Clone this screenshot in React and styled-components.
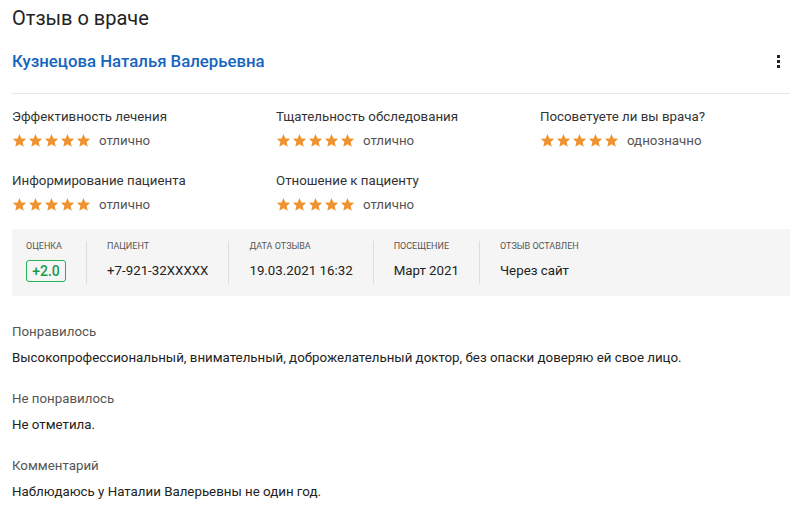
import React from "react"
import styled, { createGlobalStyle } from "styled-components"

const GlobalStyle = createGlobalStyle`
  body {
    margin: 0;
    background: #fff;
    font-family: Roboto, "Liberation Sans", sans-serif;
    color: #222;
  }
`

const ratings = [
  { label: "Эффективность лечения", value: "отлично" },
  { label: "Тщательность обследования", value: "отлично" },
  { label: "Посоветуете ли вы врача?", value: "однозначно" },
  { label: "Информирование пациента", value: "отлично" },
  { label: "Отношение к пациенту", value: "отлично" }
]

const info = [
  { label: "Пациент", value: "+7-921-32XXXXX" },
  { label: "Дата отзыва", value: "19.03.2021 16:32" },
  { label: "Посещение", value: "Март 2021" },
  { label: "Отзыв оставлен", value: "Через сайт" }
]

const sections = [
  {
    title: "Понравилось",
    text: "Высокопрофессиональный, внимательный, доброжелательный доктор, без опаски доверяю ей свое лицо."
  },
  { title: "Не понравилось", text: "Не отметила." },
  { title: "Комментарий", text: "Наблюдаюсь у Наталии Валерьевны не один год." }
]

const Star = () => (
  <svg width="15" height="15" viewBox="0 0 24 24">
    <path
      fill="#f0922f"
      d="M12 1.5l3.1 7.1 7.7.7-5.8 5.1 1.7 7.6L12 18l-6.7 4 1.7-7.6-5.8-5.1 7.7-.7z"
    />
  </svg>
)

const App = () => (
  <Page>
    <GlobalStyle />
    <Title>Отзыв о враче</Title>
    <Header>
      <DoctorName href="#">Кузнецова Наталья Валерьевна</DoctorName>
      <Kebab>
        <i />
        <i />
        <i />
      </Kebab>
    </Header>
    <Ratings>
      {ratings.map(r => (
        <Rating key={r.label}>
          <RatingLabel>{r.label}</RatingLabel>
          <StarsRow>
            <Stars>
              {[0, 1, 2, 3, 4].map(i => (
                <Star key={i} />
              ))}
            </Stars>
            <RatingValue>{r.value}</RatingValue>
          </StarsRow>
        </Rating>
      ))}
    </Ratings>
    <InfoBox>
      <InfoItem>
        <InfoLabel>Оценка</InfoLabel>
        <Badge>+2.0</Badge>
      </InfoItem>
      {info.map(i => (
        <InfoItem key={i.label} divided>
          <InfoLabel>{i.label}</InfoLabel>
          <InfoValue>{i.value}</InfoValue>
        </InfoItem>
      ))}
    </InfoBox>
    <Sections>
      {sections.map(s => (
        <Section key={s.title}>
          <SectionTitle>{s.title}</SectionTitle>
          <SectionText>{s.text}</SectionText>
        </Section>
      ))}
    </Sections>
  </Page>
)

export default App

const Page = styled.div`
  padding: 4px 10px 0 12px;
`
const Title = styled.h1`
  margin: 0;
  font-size: 20px;
  font-weight: 400;
  line-height: 28px;
  color: #222;
`
const Header = styled.div`
  display: flex;
  align-items: center;
  justify-content: space-between;
  height: 32px;
  margin-top: 13px;
  padding-bottom: 16px;
  border-bottom: 1px solid #e6e6e6;
`
const DoctorName = styled.a`
  font-size: 16.8px;
  font-weight: 500;
  color: #1565c0;
  text-decoration: none;
`
const Kebab = styled.div`
  display: flex;
  flex-direction: column;
  gap: 2px;
  margin-right: 10px;
  i {
    display: block;
    width: 3px;
    height: 3px;
    background: #222;
  }
`
const Ratings = styled.div`
  display: grid;
  grid-template-columns: repeat(3, 264px);
  row-gap: 25px;
  padding-top: 15px;
`
const Rating = styled.div`
  display: flex;
  flex-direction: column;
  gap: 8px;
`
const RatingLabel = styled.div`
  font-size: 13.3px;
  line-height: 16px;
  color: #333;
`
const StarsRow = styled.div`
  display: flex;
  align-items: center;
  gap: 8px;
`
const Stars = styled.div`
  display: flex;
  gap: 1px;
`
const RatingValue = styled.span`
  font-size: 13.3px;
  color: #555;
`
const InfoBox = styled.div`
  display: flex;
  margin-top: 17px;
  padding: 12px 14px;
  background: #f5f5f5;
  height: 43px;
`
const InfoItem = styled.div`
  display: flex;
  flex-direction: column;
  gap: 9px;
  padding: 0 20px;
  border-left: ${p => (p.divided ? "1px solid #ddd" : "none")};
  padding-left: ${p => (p.divided ? "20px" : "0")};
`
const InfoLabel = styled.div`
  font-size: 9px;
  line-height: 10px;
  text-transform: uppercase;
  color: #555;
`
const InfoValue = styled.div`
  font-size: 13.3px;
  line-height: 22px;
  color: #222;
`
const Badge = styled.div`
  box-sizing: border-box;
  width: 40px;
  height: 22px;
  border: 1px solid #24b35a;
  border-radius: 3px;
  color: #1a9a48;
  font-size: 14px;
  font-weight: 500;
  display: flex;
  align-items: center;
  justify-content: center;
`
const Sections = styled.div`
  display: flex;
  flex-direction: column;
  gap: 25px;
  margin-top: 28px;
`
const Section = styled.div`
  display: flex;
  flex-direction: column;
  gap: 10px;
`
const SectionTitle = styled.div`
  font-size: 13.3px;
  line-height: 16px;
  color: #555;
`
const SectionText = styled.div`
  font-size: 13.3px;
  line-height: 16px;
  color: #222;
`
